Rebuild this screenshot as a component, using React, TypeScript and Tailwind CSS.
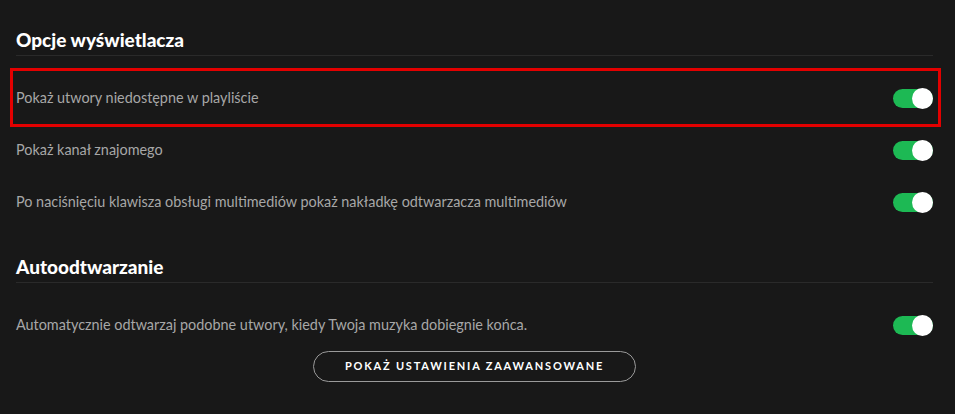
const Toggle = () => (
  <div className="relative w-[40px] h-[21px] shrink-0">
    <div className="absolute inset-x-0 top-[1px] h-[19px] rounded-full bg-[#1db954]" />
    <div className="absolute right-0 top-0 w-[21px] h-[21px] rounded-full bg-white" />
  </div>
);

const Row = ({ label, marked }: { label: string; marked?: boolean }) => (
  <div className="relative flex items-center justify-between h-[52px]">
    <span className="text-[14.4px] text-[#a7a7a7]">{label}</span>
    <Toggle />
    {marked && (
      <div className="absolute -left-[6px] -right-[8px] -top-[4px] -bottom-[3px] border-[3px] border-[#e30000]" />
    )}
  </div>
);

const Section = ({ title, children }: { title: string; children: React.ReactNode }) => (
  <section>
    <h2 className="h-[28px] pb-1 border-b border-[#2a2a2a] text-[19px] leading-6 font-black text-white">
      {title}
    </h2>
    <div className="mt-4">{children}</div>
  </section>
);

export default function App() {
  return (
    <div
      className="w-[955px] h-[414px] bg-[#181818] pl-4 pr-[22px] pt-[28px] overflow-hidden"
      style={{ fontFamily: '"Lato", "Noto Sans", sans-serif' }}
    >
      <Section title="Opcje wyświetlacza">
        <Row label="Pokaż utwory niedostępne w playliście" marked />
        <Row label="Pokaż kanał znajomego" />
        <Row label="Po naciśnięciu klawisza obsługi multimediów pokaż nakładkę odtwarzacza multimediów" />
      </Section>
      <div className="mt-[27px]">
        <Section title="Autoodtwarzanie">
          <Row label="Automatycznie odtwarzaj podobne utwory, kiedy Twoja muzyka dobiegnie końca." />
        </Section>
      </div>
      <div className="flex justify-center">
        <button className="w-[323px] h-[31px] rounded-full border border-[#9a9a9a] text-white text-[11px] font-bold tracking-[1.8px] uppercase">
          Pokaż ustawienia zaawansowane
        </button>
      </div>
    </div>
  );
}
